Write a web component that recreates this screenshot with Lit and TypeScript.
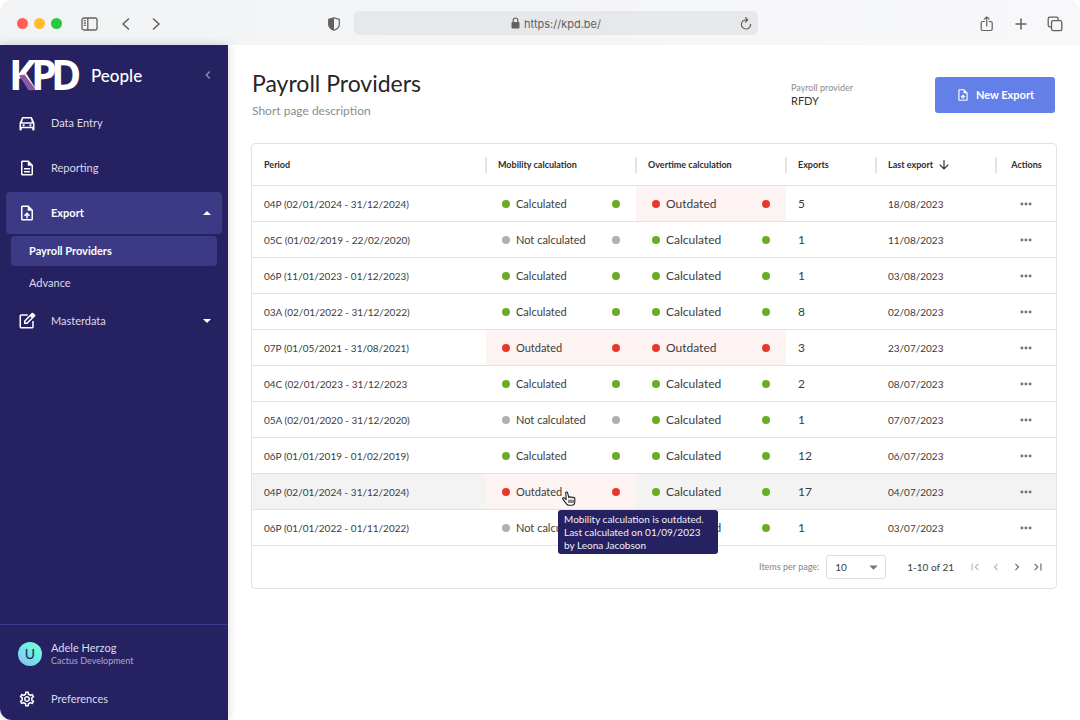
import { LitElement, html, css, svg, nothing } from "lit";
import { customElement, property } from "lit/decorators.js";
import { classMap } from "lit/directives/class-map.js";

type Status = "ok" | "none" | "bad";

interface Row {
  period: string;
  mobility: Status;
  overtime: Status;
  exports: number;
  last: string;
  hovered?: boolean;
}

const LABELS: Record<Status, string> = {
  ok: "Calculated",
  none: "Not calculated",
  bad: "Outdated",
};

const ROWS: Row[] = [
  { period: "04P (02/01/2024 - 31/12/2024)", mobility: "ok", overtime: "bad", exports: 5, last: "18/08/2023" },
  { period: "05C (01/02/2019 - 22/02/2020)", mobility: "none", overtime: "ok", exports: 1, last: "11/08/2023" },
  { period: "06P (11/01/2023 - 01/12/2023)", mobility: "ok", overtime: "ok", exports: 1, last: "03/08/2023" },
  { period: "03A (02/01/2022 - 31/12/2022)", mobility: "ok", overtime: "ok", exports: 8, last: "02/08/2023" },
  { period: "07P (01/05/2021 - 31/08/2021)", mobility: "bad", overtime: "bad", exports: 3, last: "23/07/2023" },
  { period: "04C (02/01/2023 - 31/12/2023", mobility: "ok", overtime: "ok", exports: 2, last: "08/07/2023" },
  { period: "05A (02/01/2020 - 31/12/2020)", mobility: "none", overtime: "ok", exports: 1, last: "07/07/2023" },
  { period: "06P (01/01/2019 - 01/02/2019)", mobility: "ok", overtime: "ok", exports: 12, last: "06/07/2023" },
  { period: "04P (02/01/2024 - 31/12/2024)", mobility: "bad", overtime: "ok", exports: 17, last: "04/07/2023", hovered: true },
  { period: "06P (01/01/2022 - 01/11/2022)", mobility: "none", overtime: "ok", exports: 1, last: "03/07/2023" },
];

const reset = css`
  *, *::before, *::after { box-sizing: border-box; }
  button, input, select {
    font: inherit; color: inherit; background: none; border: 0; padding: 0; margin: 0; outline: none;
  }
  button { cursor: pointer; display: flex; align-items: center; justify-content: center; }
  a { color: inherit; text-decoration: none; }
  svg { display: block; flex: none; }
  h1, p { margin: 0; font-weight: 400; }
`;

const ICONS: Record<string, unknown> = {
  car: svg`<path d="M18.9 5c-.2-.6-.8-1-1.4-1h-11c-.7 0-1.2.4-1.4 1L2 12v9c0 .6.4 1 1 1h1c.6 0 1-.4 1-1v-2h14v2c0 .6.4 1 1 1h1c.6 0 1-.4 1-1v-9zM6.8 6h10.3l1.4 5h-13zM20 17H4v-4h16z"/><circle cx="7.5" cy="15" r="1.5"/><circle cx="16.500" cy="15" r="1.5"/>`,
  doc: svg`<path d="M8 16h8v2H8zm0-4h8v2H8zm6-10H6c-1.100 0-2 .9-2 2v16c0 1.100.89 2 1.990 2H18c1.100 0 2-.9 2-2V8zm4 18H6V4h7v5h5z"/>`,
  upload: svg`<path d="M14 2H6c-1.100 0-2 .9-2 2v16c0 1.100.89 2 1.990 2H18c1.100 0 2-.9 2-2V8zm4 18H6V4h7v5h5zM8 15.010l1.410 1.410L11 14.840V19h2v-4.160l1.590 1.590L16 15.010 12.010 11z"/>`,
  edit: svg`<path d="M13 3H4.500C3 3 2 4 2 5.500v14C2 21 3 22 4.500 22h14c1.500 0 2.500-1 2.500-2.500V12h-2v8H4V5h9z"/><path d="M20.300 1.300a1.500 1.500 0 0 0-2 0L16.500 3.100 8 11.600V16h4.400l8.500-8.500 1.900-1.900a1.500 1.500 0 0 0 0-2zM11.600 14H10v-1.600l6.500-6.500 1.600 1.600z"/>`,
  gear: svg`<path d="M19.430 12.980c.04-.32.07-.64.07-.98s-.03-.66-.07-.98l2.110-1.650c.19-.15.24-.42.12-.64l-2-3.460c-.09-.16-.26-.25-.44-.25-.06 0-.12.01-.17.03l-2.490 1c-.52-.4-1.080-.73-1.690-.98l-.38-2.650C14.460 2.180 14.250 2 14 2h-4c-.25 0-.46.18-.49.42l-.38 2.650c-.61.25-1.170.59-1.690.98l-2.490-1c-.06-.02-.12-.03-.18-.03-.17 0-.34.09-.43.25l-2 3.460c-.13.22-.07.49.12.64l2.110 1.650c-.04.32-.07.65-.07.98s.03.66.07.98l-2.110 1.650c-.19.15-.24.42-.12.64l2 3.460c.09.16.26.25.44.25.06 0 .12-.01.17-.03l2.490-1c.52.4 1.080.73 1.690.98l.38 2.650c.03.24.24.42.49.42h4c.25 0 .46-.18.49-.42l.38-2.650c.61-.25 1.170-.59 1.690-.98l2.490 1c.06.02.12.03.18.03.17 0 .34-.09.43-.25l2-3.460c.12-.22.07-.49-.12-.64zm-1.980-1.710c.04.31.05.52.05.73s-.02.43-.05.73l-.14 1.130.89.7 1.080.84-.7 1.210-1.270-.51-1.040-.42-.9.68c-.43.32-.84.56-1.250.73l-1.060.43-.16 1.130-.2 1.350h-1.400l-.19-1.350-.16-1.130-1.060-.43c-.43-.18-.83-.41-1.230-.71l-.91-.7-1.060.43-1.270.51-.7-1.210 1.080-.84.89-.7-.14-1.130c-.03-.31-.05-.54-.05-.74s.02-.43.05-.73l.14-1.130-.89-.7-1.080-.84.7-1.210 1.270.51 1.040.42.9-.68c.43-.32.84-.56 1.250-.73l1.060-.43.16-1.130.2-1.350h1.390l.19 1.350.16 1.130 1.060.43c.43.18.83.41 1.230.71l.91.7 1.060-.43 1.270-.51.7 1.210-1.070.85-.89.7zM12 8c-2.210 0-4 1.790-4 4s1.790 4 4 4 4-1.790 4-4-1.790-4-4-4zm0 6c-1.100 0-2-.9-2-2s.9-2 2-2 2 .9 2 2-.9 2-2 2z"/>`,
  left: svg`<path d="M15.410 7.410 14 6l-6 6 6 6 1.410-1.410L10.830 12z"/>`,
  right: svg`<path d="M10 6 8.590 7.410 13.170 12l-4.580 4.590L10 18l6-6z"/>`,
  first: svg`<path d="M18.410 16.590 13.820 12l4.590-4.590L17 6l-6 6 6 6zM6 6h2v12H6z"/>`,
  last: svg`<path d="M5.590 7.410 10.180 12l-4.590 4.590L7 18l6-6-6-6zM16 6h2v12h-2z"/>`,
  up: svg`<path d="m6 15 6-6 6 6z"/>`,
  down: svg`<path d="m6 9 6 6 6-6z"/>`,
  more: svg`<circle cx="5" cy="12" r="2.500"/><circle cx="12" cy="12" r="2.500"/><circle cx="19" cy="12" r="2.500"/>`,
  sort: svg`<path d="m20 12-1.410-1.410L13 16.170V4h-2v12.170l-5.580-5.590L4 12l8 8z"/>`,
};

const icon = (name: string, size: number) =>
  html`<svg width=${size} height=${size} viewBox="0 0 24 24" fill="currentColor" aria-hidden="true">${ICONS[name]}</svg>`;

@customElement("browser-bar")
export class BrowserBar extends LitElement {
  static styles = [
    reset,
    css`
      :host {
        display: grid; grid-template-columns: 354px minmax(0, 1fr) 322px; align-items: center;
        height: 45px; padding-bottom: 1px; color: #616161;
        border-radius: 12px 12px 0 0;
        background: linear-gradient(90deg, #f1f3f4, #f8f8fb);
      }
      .group { display: flex; align-items: center; padding-top: 3px; }
      .left { padding-left: 17px; }
      .right { justify-content: flex-end; padding-right: 17px; gap: 18px; }
      .lights { display: flex; gap: 6px; margin-right: 19px; }
      .light { width: 11px; height: 11px; border-radius: 50%; }
      .red { background: #ff5f57; }
      .yellow { background: #febc2e; }
      .green { background: #28c840; }
      .side { margin-right: 20px; }
      .back { margin-right: 14px; }
      .shield { margin-left: auto; margin-right: 13px; }
      .address {
        display: flex; align-items: center; justify-content: center; position: relative;
        height: 24px; margin-top: 2px; border-radius: 5px; background: #e7e8ea;
        font: 11px/16px Inter, sans-serif;
      }
      .url { field-sizing: content; margin-left: 4px; padding-top: 2px; }
      .reload { position: absolute; right: 4px; top: 5px; }
    `,
  ];

  render() {
    return html`
      <div class="group left">
        <div class="lights"><i class="light red"></i><i class="light yellow"></i><i class="light green"></i></div>
        <button class="side" aria-label="Toggle sidebar">
          <svg width="17" height="14" viewBox="0 0 17 14" fill="none" stroke="currentColor" stroke-width="1.300">
            <rect x="1" y="1" width="15" height="12" rx="2"/><path d="M6.800 1v12M2.800 3.700h2M2.800 6h2M2.800 8.300h2"/>
          </svg>
        </button>
        <button class="back" aria-label="Back">
          <svg width="16" height="16" viewBox="0 0 16 16" fill="none" stroke="currentColor" stroke-width="1.600" stroke-linecap="round" stroke-linejoin="round"><path d="M10.500 3 5 8l5.500 5"/></svg>
        </button>
        <button aria-label="Forward">
          <svg width="16" height="16" viewBox="0 0 16 16" fill="none" stroke="currentColor" stroke-width="1.600" stroke-linecap="round" stroke-linejoin="round"><path d="M5.500 3 11 8l-5.500 5"/></svg>
        </button>
        <button class="shield" aria-label="Privacy report">
          <svg width="14" height="14" viewBox="0 0 14 14"><path d="M7 .8 12.300 2.400v5c0 2.800-2.500 4.700-5.300 5.900C4.200 12.100 1.700 10.200 1.700 7.400v-5z" fill="none" stroke="currentColor" stroke-width="1.200" stroke-linejoin="round"/><path d="M7 .8v12.500C4.200 12.100 1.700 10.200 1.700 7.400v-5z" fill="currentColor"/></svg>
        </button>
      </div>
      <div class="address">
        <svg width="9" height="12" viewBox="0 0 9 12"><rect x=".5" y="5" width="8" height="6.500" rx="1" fill="currentColor"/><path d="M2.200 5.500V3.300a2.300 2.300 0 0 1 4.600 0v2.200" fill="none" stroke="currentColor" stroke-width="1.200"/></svg>
        <input class="url" aria-label="Address" value="https://kpd.be/">
        <button class="reload" aria-label="Reload">
          <svg width="16" height="16" viewBox="0 0 16 16" fill="none" stroke="currentColor" stroke-width="1.200" stroke-linecap="round" stroke-linejoin="round"><path d="M12.600 8.300A4.600 4.600 0 1 1 8 3.800h1.500M7.600 1.600l2.100 2.200-2.100 2.200"/></svg>
        </button>
      </div>
      <div class="group right">
        <button aria-label="Share">
          <svg width="16" height="16" viewBox="0 0 16 16" fill="none" stroke="currentColor" stroke-width="1.200" stroke-linecap="round" stroke-linejoin="round"><path d="M5.500 5.500H3.600C2.700 5.500 2.200 6 2.200 6.900v6.200c0 .9.500 1.400 1.400 1.400h8.200c.9 0 1.400-.5 1.400-1.400V6.900c0-.9-.5-1.400-1.400-1.400H10M7.700 10V1M5.300 3.200 7.700.8l2.400 2.400"/></svg>
        </button>
        <button aria-label="New tab">
          <svg width="16" height="16" viewBox="0 0 16 16" fill="none" stroke="currentColor" stroke-width="1.500" stroke-linecap="round"><path d="M8 3v10M3 8h10"/></svg>
        </button>
        <button aria-label="Show tabs">
          <svg width="16" height="16" viewBox="0 0 16 16" fill="none" stroke="currentColor" stroke-width="1.300" stroke-linejoin="round"><rect x="4.500" y="4.700" width="10.300" height="10" rx="1.800"/><path d="M4.500 10.800H2.800c-1 0-1.600-.6-1.600-1.600V2.800c0-1 .6-1.600 1.600-1.600H9.500c1 0 1.600.6 1.600 1.600v1.900"/></svg>
        </button>
      </div>
    `;
  }
}

@customElement("side-nav")
export class SideNav extends LitElement {
  static styles = [
    reset,
    css`
      :host {
        display: flex; flex-direction: column; color: #dcdcec; background: #262161;
        border-bottom-left-radius: 12px; box-shadow: 0 0 10px rgba(38, 33, 97, 0.2);
        font-size: 11px; line-height: 16px;
      }
      .brand { display: flex; align-items: center; gap: 6px; padding: 0 12px 0 9px; color: #fff; }
      .product { padding-top: 4px; font-size: 17px; line-height: 20px; font-weight: 500; }
      .logo { font: 700 41px "Open Sans", sans-serif; overflow: visible; }
      .collapse { margin-left: auto; padding-top: 3px; color: #8d8fc4; }
      .nav { display: flex; flex-direction: column; gap: 3px; }
      .item { display: flex; align-items: center; gap: 15px; height: 42px; margin: 0 6px; padding: 0 7px 0 12px; border-radius: 4px; }
      .item svg:first-child { color: #fff; }
      .caret { margin-left: auto; }
      .current { background: #3c3a85; color: #fff; font-weight: 700; }
      .sub { display: flex; flex-direction: column; gap: 2px; padding: 0 11px; margin-top: -1px; margin-bottom: -1px; }
      .subitem { padding: 7px 18px; border-radius: 4px; }
      .foot { margin-top: auto; border-top: 1px solid #3b3b8c; padding: 16px 0 0; }
      .user { display: flex; align-items: center; gap: 9px; padding: 0 18px 11px; }
      .avatar {
        display: grid; place-items: center; width: 24px; height: 24px; border-radius: 50%;
        color: #262161; font-size: 14px; background: linear-gradient(35deg, #8fb8ff, #6cf0e0 60%, #7dffd8);
      }
      .who { line-height: 14px; }
      .org { font-size: 9px; line-height: 12px; color: #a9a8cf; }
    `,
  ];

  render() {
    return html`
      <div class="brand">
        <svg class="logo" width="76" height="57" viewBox="0 0 76 57" role="img" aria-label="KPD">
          <text x="0 22 42" y="45" fill="#fff">KPD</text>
          <path d="M10 30.500 15.500 29.500 26 43.500V45.300H19.500z" fill="#8a56a8"/>
        </svg>
        <span class="product">People</span>
        <button class="collapse" aria-label="Collapse menu">${icon("left", 16)}</button>
      </div>
      <nav class="nav">
        <a class="item" href="#">${icon("car", 18)}Data Entry</a>
        <a class="item" href="#">${icon("doc", 18)}Reporting</a>
        <a class="item current" href="#">${icon("upload", 18)}Export<span class="caret">${icon("up", 16)}</span></a>
        <div class="sub">
          <a class="subitem current" href="#">Payroll Providers</a>
          <a class="subitem" href="#">Advance</a>
        </div>
        <a class="item" href="#">${icon("edit", 18)}Masterdata<span class="caret">${icon("down", 16)}</span></a>
      </nav>
      <div class="foot">
        <div class="user">
          <span class="avatar">U</span>
          <div class="who"><div>Adele Herzog</div><div class="org">Cactus Development</div></div>
        </div>
        <a class="item" href="#">${icon("gear", 18)}Preferences</a>
      </div>
    `;
  }
}

@customElement("payroll-table")
export class PayrollTable extends LitElement {
  @property({ attribute: false }) rows: Row[] = [];

  static styles = [
    reset,
    css`
      :host { display: block; border: 1px solid #e2e2e2; border-radius: 4px; color: #3c3c3c; }
      .table { width: 100%; table-layout: fixed; border-collapse: separate; border-spacing: 0; font-size: 10px; line-height: 16px; }
      .calc { width: 150px; }
      .count { width: 90px; }
      .date { width: 120px; }
      .acts { width: 60px; }
      th, td { text-align: left; padding: 0 12px; border-bottom: 1px solid #e2e2e2; white-space: nowrap; }
      th { height: 42px; font-size: 9px; font-weight: 700; color: #2d2d2d; padding: 0; }
      .head { display: flex; align-items: center; gap: 4px; height: 16px; padding-left: 12px; }
      .rule { border-left: 2px solid #e4e4e4; padding-left: 11px; margin-left: -1px; }
      .center { justify-content: center; padding: 0; }
      td { height: 36px; }
      .hovered { background: #f3f3f3; }
      .status { position: relative; padding: 0 16px; font-size: 11px; }
      .bad { background: #fdf3f3; }
      .line { display: flex; align-items: center; gap: 6px; }
      .dot { width: 8px; height: 8px; border-radius: 50%; background: #6aac22; }
      .dot:last-child { margin-left: auto; }
      .bad .dot { background: #e53a2b; }
      .none .dot { background: #b0b0b0; }
      .large { font-size: 12px; }
      .actions { padding: 0; }
      .more { margin: 0 auto; color: #737373; }
      .cursor { position: absolute; left: 76px; top: 17px; z-index: 2; }
      .tip {
        position: absolute; left: 72px; top: 36px; z-index: 1; padding: 3px 6px 2px; width: 160px;
        border-radius: 3px; background: #262161; color: #f0f0f8; font-size: 10px; line-height: 13px; white-space: pre;
      }
      .footer { display: flex; align-items: center; justify-content: flex-end; height: 42px; padding-right: 9px; font-size: 10px; line-height: 14px; }
      .label { color: #858585; margin-right: 7px; font-size: 9px; }
      .pick { display: grid; align-items: center; width: 60px; height: 24px; border: 1px solid #dedede; border-radius: 3px; }
      .size { grid-area: 1 / 1; appearance: none; width: 100%; height: 100%; padding-left: 8px; }
      .arrow { grid-area: 1 / 1; justify-self: end; margin-right: 3px; color: #757575; pointer-events: none; }
      .range { margin: 0 12px 0 21px; }
      .pager { display: flex; gap: 3px; color: #6b6b6b; }
      .page { width: 18px; height: 18px; }
      .page:disabled { color: #b5b5b5; }
    `,
  ];

  private status(value: Status, large: boolean, tip: boolean) {
    return html`
      <td class=${classMap({ status: true, [value]: true, large })}>
        <div class="line"><i class="dot"></i><span>${LABELS[value]}</span><i class="dot"></i></div>
        ${tip
          ? html`<svg class="cursor" width="14" height="15" viewBox="0 0 14 15" fill="#fff" stroke="#222" stroke-width="1.100" stroke-linejoin="round" stroke-linecap="round"><path d="M4.200 8.700 2.300 6.900c-.9-.7-2.100.3-1.400 1.300l3.300 4.400c.7 1 1.500 1.600 2.900 1.600h2.500c2.100 0 3.200-1.500 3.200-3.400V7.200c0-1.200-1.700-1.200-1.800-.2-.1-1.300-1.900-1.400-2.100-.3-.2-1.200-2-1.100-2.100 0L5.600 1.900C5.300.6 3.500.9 3.700 2.200z"/><path d="M7 9v2.500M9 9v2.500M11 9v2.500" fill="none"/></svg>
              <div class="tip" role="tooltip">Mobility calculation is outdated.
Last calculated on 01/09/2023
by Leona Jacobson</div>`
          : nothing}
      </td>
    `;
  }

  render() {
    return html`
      <table class="table">
        <colgroup><col><col class="calc"><col class="calc"><col class="count"><col class="date"><col class="acts"></colgroup>
        <thead>
          <tr>
            <th><div class="head">Period</div></th>
            <th><div class="head rule">Mobility calculation</div></th>
            <th><div class="head rule">Overtime calculation</div></th>
            <th><div class="head rule">Exports</div></th>
            <th><div class="head rule">Last export ${icon("sort", 14)}</div></th>
            <th><div class="head rule center">Actions</div></th>
          </tr>
        </thead>
        <tbody>
          ${this.rows.map(
            (r) => html`
              <tr class=${classMap({ hovered: !!r.hovered })}>
                <td>${r.period}</td>
                ${this.status(r.mobility, false, !!r.hovered)} ${this.status(r.overtime, true, false)}
                <td class="large">${r.exports}</td>
                <td>${r.last}</td>
                <td class="actions"><button class="more" aria-label="Row actions">${icon("more", 14)}</button></td>
              </tr>
            `,
          )}
        </tbody>
      </table>
      <div class="footer">
        <label class="label" for="size">Items per page:</label>
        <div class="pick">
          <select class="size" id="size"><option>10</option><option>25</option><option>50</option></select>
          <span class="arrow">${icon("down", 17)}</span>
        </div>
        <span class="range">1-10 of 21</span>
        <div class="pager">
          <button class="page" disabled aria-label="First page">${icon("first", 14)}</button>
          <button class="page" disabled aria-label="Previous page">${icon("left", 14)}</button>
          <button class="page" aria-label="Next page">${icon("right", 14)}</button>
          <button class="page" aria-label="Last page">${icon("last", 14)}</button>
        </div>
      </div>
    `;
  }
}

@customElement("app-root")
export class AppRoot extends LitElement {
  static styles = [
    reset,
    css`
      :host {
        display: grid; grid-template-rows: auto 1fr; min-height: 100vh; background: #fff;
        font-family: Lato, sans-serif;
      }
      .body { display: grid; grid-template-columns: 228px minmax(0, 1fr); }
      .main { padding: 24px 23px; }
      .top { display: flex; align-items: flex-start; margin-bottom: 24px; padding-right: 2px; }
      .title { font-size: 23px; line-height: 28px; color: #262626; }
      .intro { flex: 1; padding-left: 1px; }
      .desc { margin-top: 6px; font-size: 12px; line-height: 16px; color: #8c8c8c; }
      .provider { width: 144px; padding-top: 12px; font-size: 11px; line-height: 13px; color: #333; }
      .caption { font-size: 9px; color: #8c8c8c; }
      .export {
        gap: 6px; width: 120px; height: 36px; margin-top: 8px; padding-bottom: 1px; border-radius: 3px; background: #637fe8;
        color: #fff; font-size: 11px; font-weight: 700;
      }
    `,
  ];

  render() {
    return html`
      <browser-bar></browser-bar>
      <div class="body">
        <side-nav></side-nav>
        <main class="main">
          <header class="top">
            <div class="intro">
              <h1 class="title">Payroll Providers</h1>
              <p class="desc">Short page description</p>
            </div>
            <div class="provider"><div class="caption">Payroll provider</div><div>RFDY</div></div>
            <button class="export">${icon("upload", 14)}New Export</button>
          </header>
          <payroll-table .rows=${ROWS}></payroll-table>
        </main>
      </div>
    `;
  }
}
